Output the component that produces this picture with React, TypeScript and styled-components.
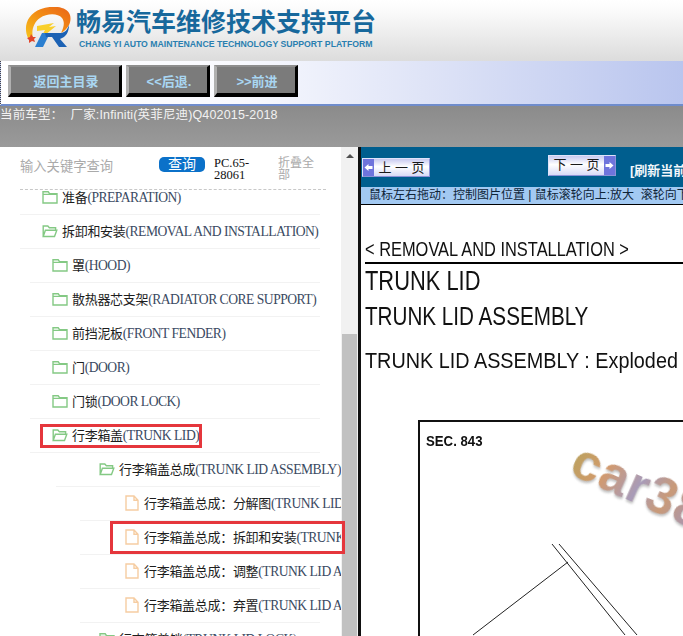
import React from "react";
import styled, { createGlobalStyle } from "styled-components";

const GlobalStyle = createGlobalStyle`
  html, body {
    margin: 0;
    padding: 0;
    background: #fff;
    overflow: hidden;
  }
`;

const serif = `"Liberation Serif", "Noto Sans CJK SC", serif`;
const sans = `"Liberation Sans", "Noto Sans CJK SC", sans-serif`;

const Page = styled.div`
  width: 683px;
  height: 636px;
  overflow: hidden;
  display: flex;
  flex-direction: column;
  font-family: ${sans};
`;

const Header = styled.header`
  height: 61px;
  flex: none;
  box-sizing: border-box;
  padding: 7px 0 0 25px;
  display: flex;
  gap: 5px;
  background: linear-gradient(#ffffff, #fafafa 20%, #dcdcdc);
`;

const Brand = styled.div`
  display: flex;
  flex-direction: column;
`;

const BrandTitle = styled.div`
  font-size: 25px;
  line-height: 30px;
  font-weight: 700;
  color: #17689c;
  white-space: nowrap;
`;

const BrandSub = styled.div`
  font-size: 8.7px;
  line-height: 12px;
  margin: 1px 0 0 3px;
  font-weight: 700;
  color: #2a7fb0;
  white-space: nowrap;
`;

const NavBar = styled.nav`
  height: 45px;
  flex: none;
  box-sizing: border-box;
  padding: 4px 0 0 7px;
  display: flex;
  align-items: flex-start;
  gap: 4px;
  border-left: 1px dotted #444;
  border-bottom: 2px solid #6f8ccc;
  background: linear-gradient(90deg, #ffffff 0, #f8f9fe 35%, #dfe4f7 62%, #b9c5ee 100%);
`;

const NavButton = styled.button<{ $width: number }>`
  width: ${(p) => p.$width}px;
  height: 32px;
  box-sizing: border-box;
  padding: 0 0 0 2px;
  border-style: solid;
  border-width: 2px 3px 4px 3px;
  border-color: #8e8e8e #000 #000 #b0b0b0;
  background: #7b7b7b;
  color: #a9d6f2;
  font-family: ${sans};
  font-size: 13px;
  font-weight: 700;
`;

const CarBar = styled.div`
  height: 41px;
  flex: none;
  box-sizing: border-box;
  padding-top: 1px;
  background: linear-gradient(#8b8b8b, #9a9a9a);
  color: #f2f2f2;
  font-size: 12.5px;
  letter-spacing: 0.15px;
  line-height: 17px;
  white-space: pre;
`;

const Main = styled.main`
  flex: 1;
  min-height: 0;
  display: flex;
`;

const LeftPanel = styled.section`
  position: relative;
  width: 358px;
  flex: none;
  display: flex;
  background: #fff;
`;

const TreePane = styled.div`
  width: 341px;
  flex: none;
  overflow: hidden;
  display: flex;
  flex-direction: column;
`;

const SearchRow = styled.div`
  height: 43px;
  flex: none;
  box-sizing: border-box;
  margin: 0 15px 0 20px;
  border-bottom: 1px dashed #c8c8c8;
  display: flex;
  align-items: flex-start;
  padding-top: 10px;
`;

const SearchHint = styled.div`
  width: 139px;
  flex: none;
  font-size: 13.3px;
  line-height: 19px;
  color: #aaaaaa;
`;

const SearchButton = styled.button`
  width: 46px;
  height: 15px;
  flex: none;
  padding: 0;
  border: 0;
  border-radius: 5px;
  background: #0b71c9;
  color: #fff;
  font-family: ${sans};
  font-size: 14px;
  line-height: 15px;
`;

const PartNo = styled.div`
  width: 36px;
  flex: none;
  margin-left: 9px;
  font-family: ${serif};
  font-size: 12.5px;
  line-height: 12px;
  color: #111;
`;

const Collapse = styled.div`
  width: 36px;
  flex: none;
  margin-left: 28px;
  font-size: 12px;
  line-height: 12px;
  color: #aaaaaa;
`;

const Tree = styled.ul`
  list-style: none;
  margin: -9px 0 0;
  padding: 0;
  overflow: hidden;
  flex: 1;
  min-height: 0;
`;

const Row = styled.li<{ $line: number; $pad: number }>`
  height: 34px;
  box-sizing: border-box;
  width: ${(p) => 320 - p.$line}px;
  margin-left: ${(p) => p.$line}px;
  padding-left: ${(p) => p.$pad}px;
  padding-bottom: 2px;
  border-bottom: 1px solid #f2f2f2;
  display: flex;
  align-items: center;
  gap: 4px;
  white-space: nowrap;
  font-family: ${serif};
  font-size: 13.6px;
  letter-spacing: -0.5px;
  color: #3a4a62;
`;

const Cjk = styled.span`
  font-size: 13px;
  letter-spacing: -0.3px;
  color: #1d1d1d;
`;

const IconSlot = styled.svg`
  flex: none;
  width: 16px;
  height: 16px;
  fill: none;
`;

const Highlight = styled.div<{ $left: number; $top: number; $w: number; $h: number }>`
  position: absolute;
  left: ${(p) => p.$left}px;
  top: ${(p) => p.$top}px;
  width: ${(p) => p.$w}px;
  height: ${(p) => p.$h}px;
  box-sizing: border-box;
  border: 3px solid #e5363c;
  pointer-events: none;
`;

const Scrollbar = styled.div`
  width: 17px;
  flex: none;
  display: flex;
  flex-direction: column;
  background: #f1f1f1;
`;

const ScrollUp = styled.div`
  height: 17px;
  flex: none;
  display: flex;
  align-items: center;
  justify-content: center;
  &::before {
    content: "";
    border-left: 4px solid transparent;
    border-right: 4px solid transparent;
    border-bottom: 4px solid #505050;
  }
`;

const ScrollGap = styled.div`
  flex: 1;
`;

const ScrollThumb = styled.div`
  height: 302px;
  flex: none;
  margin: 0 1px;
  background: #c1c1c1;
`;

const RightPanel = styled.section`
  flex: 1;
  min-width: 0;
  overflow: hidden;
  display: flex;
  flex-direction: column;
  box-sizing: border-box;
  border-left: 3px solid #111;
  background: #fff;
`;

const Pager = styled.div`
  height: 40px;
  flex: none;
  box-sizing: border-box;
  padding-top: 8px;
  display: flex;
  align-items: flex-start;
  background: #005e8e;
  white-space: nowrap;
`;

const PageButton = styled.div<{ $left: number; $top: number; $reverse?: boolean }>`
  width: 68px;
  height: ${(p) => (p.$reverse ? 21 : 19)}px;
  flex: none;
  box-sizing: border-box;
  margin-left: ${(p) => p.$left}px;
  margin-top: ${(p) => p.$top}px;
  display: flex;
  flex-direction: ${(p) => (p.$reverse ? "row-reverse" : "row")};
  border: 1px solid #dfe3fa;
  border-right-color: #8d92d6;
  border-bottom-color: #8d92d6;
  background: linear-gradient(#c7c9f0, #ffffff 45%, #d8daf6);
`;

const PageArrow = styled.span`
  width: 11px;
  flex: none;
  background: #6f74dc;
  color: #fff;
  display: flex;
  align-items: center;
  justify-content: center;
`;

const PageLabel = styled.span`
  flex: 1;
  text-align: center;
  font-size: 13px;
  line-height: 17px;
  color: #1a1a1a;
  white-space: pre;
`;

const Refresh = styled.div`
  margin: 8px 0 0 14px;
  color: #f2f6fa;
  font-size: 13px;
  font-weight: 700;
  line-height: 16px;
`;

const HintBar = styled.div`
  height: 18px;
  flex: none;
  box-sizing: border-box;
  padding-left: 8px;
  border-bottom: 1px solid #000;
  background: #a2c9f2;
  color: #0e2438;
  font-size: 12px;
  line-height: 17px;
  white-space: pre;
`;

const Doc = styled.article`
  flex: 1;
  min-height: 0;
  padding: 32px 0 0 4px;
  font-family: "Liberation Sans", sans-serif;
  color: #111;
  white-space: nowrap;
`;

const Rule = styled.div`
  height: 2px;
  margin: 1px 0 0 0;
  background: #000;
`;

// the scanned document text is a squeezed Arial, so each line carries its own x scale
const DocLine = styled.div<{ $size: number; $top: number; $h: number; $squeeze: number }>`
  font-size: ${(p) => p.$size}px;
  line-height: ${(p) => p.$h}px;
  margin-top: ${(p) => p.$top}px;
  transform: scaleX(${(p) => p.$squeeze});
  transform-origin: left;
`;

const Figure = styled.div`
  position: relative;
  width: 400px;
  height: 300px;
  box-sizing: border-box;
  margin: 46px 0 0 53px;
  border: 2px solid #111;
  padding: 9px 0 0 6px;
`;

const SecLabel = styled.div`
  font-size: 15px;
  font-weight: 700;
  line-height: 20px;
  transform: scaleX(0.88);
  transform-origin: left;
`;

const FigureArt = styled.svg`
  position: absolute;
  left: 0;
  top: 0;
  width: 396px;
  height: 296px;
  fill: none;
  stroke: #222;
  stroke-width: 1;
`;

const Watermark = styled.div`
  position: absolute;
  left: 166px;
  top: 10px;
  font-size: 52px;
  font-weight: 700;
  line-height: 54px;
  letter-spacing: 1px;
  color: transparent;
  background: linear-gradient(100deg, #b9a25e, #d39a6c 25%, #a89bb8 50%, #c99a78 70%, #9c94c4);
  -webkit-background-clip: text;
  background-clip: text;
  filter: drop-shadow(1px 2px 1px rgba(120, 120, 120, 0.45)) blur(0.5px);
  transform: rotate(24deg);
  transform-origin: left top;
`;

const Logo = () => (
  <svg width="46" height="42" viewBox="0 0 46 42" style={{ flex: "none" }}>
    <defs>
      <linearGradient id="ring" x1="0" y1="1" x2="1" y2="0">
        <stop offset="0" stopColor="#f7c21c" />
        <stop offset="0.55" stopColor="#f28a14" />
        <stop offset="1" stopColor="#e9641a" />
      </linearGradient>
    </defs>
    <path
      d="M3 31C-2 20 2 7 16 2c11-4 26-3 29 6 2 7-2 14-9 18 3-6 4-11 1-15C33 6 22 6 15 11 9 15 6 23 8 31z"
      fill="url(#ring)"
    />
    <path d="M12 19l17-3-5 4 7-1-16 13 5-9-8 1z" fill="#f9cf2a" />
    <path d="M10 40l7-14h8l-7 14z" fill="#2b7fd0" />
    <path d="M20 26h15c4 0 7-2 9-8 0 7-3 12-9 14l7 8h-8l-7-10h-6z" fill="#1c62b4" />
    <path d="M2 31l3-1 1-3 2 3 3 0-2 2 1 3-3-1-3 2 0-3z" fill="#e2452a" />
  </svg>
);

const FolderIcon = ({ open }: { open?: boolean }) => (
  <IconSlot viewBox="0 0 16 16" stroke="#84c984" strokeWidth="1.4">
    {open ? (
      <path d="M1.2 13.5V3h4.6l1.6 1.8h6.2v2.4M1.2 13.5l2.2-6.3h11.4l-2.3 6.3z" />
    ) : (
      <path d="M1 14V2.8h5.2l1.4 1.8H15V14zM1 5.4h14" />
    )}
  </IconSlot>
);

const DocIcon = () => (
  <IconSlot viewBox="0 0 16 16" stroke="#f6cda2" strokeWidth="1.4">
    <path d="M2 1h8l4 4.2V15H2zM10 1v4.2h4" />
  </IconSlot>
);

type Item = { level: number; kind: "closed" | "open" | "doc"; cn: string; en: string };

const items: Item[] = [
  { level: 1, kind: "closed", cn: "准备", en: "(PREPARATION)" },
  { level: 1, kind: "open", cn: "拆卸和安装", en: "(REMOVAL AND INSTALLATION)" },
  { level: 2, kind: "closed", cn: "罩", en: "(HOOD)" },
  { level: 2, kind: "closed", cn: "散热器芯支架", en: "(RADIATOR CORE SUPPORT)" },
  { level: 2, kind: "closed", cn: "前挡泥板", en: "(FRONT FENDER)" },
  { level: 2, kind: "closed", cn: "门", en: "(DOOR)" },
  { level: 2, kind: "closed", cn: "门锁", en: "(DOOR LOCK)" },
  { level: 2, kind: "open", cn: "行李箱盖", en: "(TRUNK LID)" },
  { level: 3, kind: "open", cn: "行李箱盖总成", en: "(TRUNK LID ASSEMBLY)" },
  { level: 4, kind: "doc", cn: "行李箱盖总成：分解图", en: "(TRUNK LID ASSEMBLY : Exploded View)" },
  { level: 4, kind: "doc", cn: "行李箱盖总成：拆卸和安装", en: "(TRUNK LID ASSEMBLY : Removal)" },
  { level: 4, kind: "doc", cn: "行李箱盖总成：调整", en: "(TRUNK LID ASSEMBLY : Adjustment)" },
  { level: 4, kind: "doc", cn: "行李箱盖总成：弃置", en: "(TRUNK LID ASSEMBLY : Disposal)" },
  { level: 3, kind: "closed", cn: "行李箱盖锁", en: "(TRUNK LID LOCK)" },
];

const lineStart: Record<number, number> = { 1: 20, 2: 30, 3: 56, 4: 80 };
const iconPad: Record<number, number> = { 1: 22, 2: 22, 3: 43, 4: 44 };

export default function App() {
  return (
    <Page>
      <GlobalStyle />
      <Header>
        <Logo />
        <Brand>
          <BrandTitle>畅易汽车维修技术支持平台</BrandTitle>
          <BrandSub>CHANG YI AUTO MAINTENANCE TECHNOLOGY SUPPORT PLATFORM</BrandSub>
        </Brand>
      </Header>
      <NavBar>
        <NavButton $width={114}>返回主目录</NavButton>
        <NavButton $width={84}>&lt;&lt;后退.</NavButton>
        <NavButton $width={84}>&gt;&gt;前进</NavButton>
      </NavBar>
      <CarBar>当前车型：  厂家:Infiniti(英菲尼迪)Q402015-2018</CarBar>
      <Main>
        <LeftPanel>
          <TreePane>
            <SearchRow>
              <SearchHint>输入关键字查询</SearchHint>
              <SearchButton>查询</SearchButton>
              <PartNo>PC.65-28061</PartNo>
              <Collapse>折叠全部</Collapse>
            </SearchRow>
            <Tree>
              {items.map((item) => (
                <Row key={item.cn + item.en} $line={lineStart[item.level]} $pad={iconPad[item.level]}>
                  {item.kind === "doc" ? <DocIcon /> : <FolderIcon open={item.kind === "open"} />}
                  <span>
                    <Cjk>{item.cn}</Cjk>
                    {item.en}
                  </span>
                </Row>
              ))}
            </Tree>
          </TreePane>
          <Scrollbar>
            <ScrollUp />
            <ScrollGap />
            <ScrollThumb />
          </Scrollbar>
          <Highlight $left={40} $top={277} $w={162} $h={24} />
          <Highlight $left={110} $top={374} $w={235} $h={33} />
        </LeftPanel>
        <RightPanel>
          <Pager>
            <PageButton $left={1} $top={3}>
              <PageArrow>
                <svg width="9" height="9" viewBox="0 0 9 9">
                  <path d="M0.5 4.5L4.5 1v2h4v3h-4v2z" fill="#fff" />
                </svg>
              </PageArrow>
              <PageLabel>上 一 页</PageLabel>
            </PageButton>
            <PageButton $left={118} $top={0} $reverse>
              <PageArrow>
                <svg width="9" height="9" viewBox="0 0 9 9">
                  <path d="M8.5 4.5L4.5 1v2h-4v3h4v2z" fill="#fff" />
                </svg>
              </PageArrow>
              <PageLabel>下 一 页</PageLabel>
            </PageButton>
            <Refresh>[刷新当前页]</Refresh>
          </Pager>
          <HintBar>鼠标左右拖动：控制图片位置 | 鼠标滚轮向上:放大  滚轮向下:缩小</HintBar>
          <Doc>
            <DocLine $size={20.4} $top={0} $h={24} $squeeze={0.805}>&lt; REMOVAL AND INSTALLATION &gt;</DocLine>
            <Rule />
            <DocLine $size={27} $top={1} $h={32} $squeeze={0.81}>TRUNK LID</DocLine>
            <DocLine $size={25} $top={3} $h={32} $squeeze={0.826}>TRUNK LID ASSEMBLY</DocLine>
            <DocLine $size={22} $top={16} $h={26} $squeeze={0.9}>TRUNK LID ASSEMBLY : Exploded View</DocLine>
            <Figure>
              <SecLabel>SEC. 843</SecLabel>
              <FigureArt viewBox="0 0 396 296">
                <path d="M132 122L205 213M139 122L217 213M148 140L53 213" />
              </FigureArt>
              <Watermark>car38</Watermark>
            </Figure>
          </Doc>
        </RightPanel>
      </Main>
    </Page>
  );
}
